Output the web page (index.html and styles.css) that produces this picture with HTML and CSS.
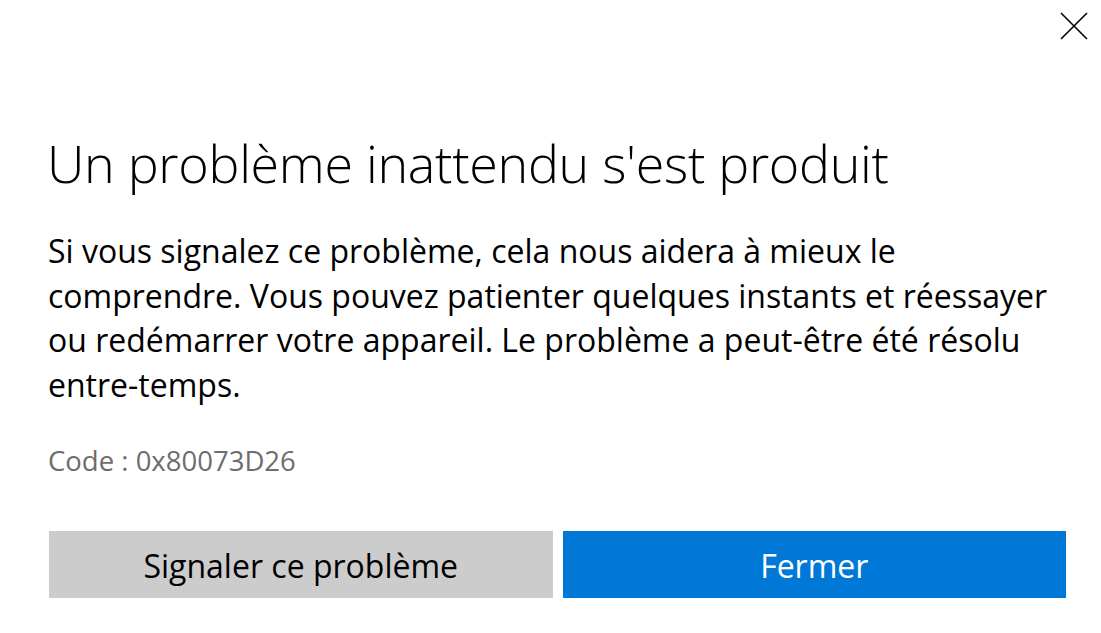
FILE: index.html
```html
<!DOCTYPE html>
<html lang="fr">
<head>
<meta charset="utf-8">
<title>Erreur</title>
<link rel="stylesheet" href="styles.css">
</head>
<body>
<div class="dialog">
  <div class="topbar">
    <button class="close" aria-label="Fermer">
      <svg width="28" height="28" viewBox="0 0 28 28"><path d="M1 1 L27 27 M27 1 L1 27" stroke="#000" stroke-width="1.6" fill="none"/></svg>
    </button>
  </div>
  <h1 class="title">Un problème inattendu s'est produit</h1>
  <p class="message">Si vous signalez ce problème, cela nous aidera à mieux le comprendre. Vous pouvez patienter quelques instants et réessayer ou redémarrer votre appareil. Le problème a peut-être été résolu entre-temps.</p>
  <p class="code">Code : 0x80073D26</p>
  <div class="actions">
    <button class="btn btn-secondary">Signaler ce problème</button>
    <button class="btn btn-primary">Fermer</button>
  </div>
</div>
</body>
</html>
```
FILE: styles.css
```css
html, body {
  margin: 0;
  padding: 0;
  background: #ffffff;
}
body {
  font-family: "Open Sans", "Noto Sans", "Liberation Sans", sans-serif;
  color: #000;
}
.dialog {
  width: 1101px;
  height: 633px;
  box-sizing: border-box;
  padding: 0 35px 0 49px;
  display: flex;
  flex-direction: column;
}
.topbar {
  display: flex;
  justify-content: flex-end;
  padding-top: 12px;
  margin-right: -22px;
  height: 60px;
  box-sizing: border-box;
}
.close {
  width: 28px;
  height: 28px;
  padding: 0;
  border: 0;
  background: transparent;
  display: block;
}
.close svg { display: block; }
.title {
  margin: 73px 0 0 -2px;
  font-weight: 300;
  font-size: 52px;
  line-height: 60px;
  letter-spacing: -0.3px;
  white-space: nowrap;
}
.message {
  margin: 36px 0 0 -1px;
  font-size: 32px;
  line-height: 44.7px;
  max-width: 1012px;
}
.code {
  margin: 38px 0 0 -1px;
  font-size: 27.5px;
  line-height: 30px;
  color: #6d6d6d;
}
.actions {
  display: flex;
  gap: 10px;
  margin-top: 55px;
}
.btn {
  flex: 1;
  height: 67px;
  border: 0;
  font-family: inherit;
  font-size: 32px;
  padding: 3px 0 0 0;
}
.btn-secondary {
  background: #cccccc;
  color: #000;
}
.btn-primary {
  background: #0078d7;
  color: #fff;
}
```
